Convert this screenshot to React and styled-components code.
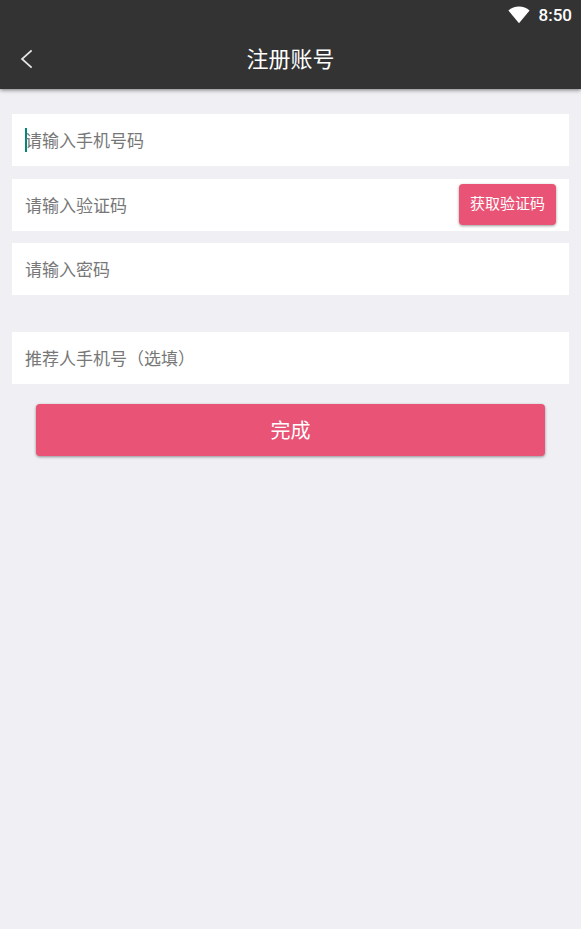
import React from 'react'
import styled, { createGlobalStyle, ThemeProvider } from 'styled-components'

const theme = {
  bar: '#333333',
  page: '#efeff4',
  field: '#ffffff',
  hint: '#777777',
  accent: '#e95375',
  caret: '#00897b',
}

const GlobalStyle = createGlobalStyle`
  * { box-sizing: border-box; }
  body { margin: 0; background: ${theme.page}; font-family: Roboto, "Noto Sans CJK SC", sans-serif; }
  button, input { font-family: inherit; }
`
const Header = styled.header`
  background: ${({theme}) => theme.bar}; color: #fff; box-shadow: 0 1px 4px rgba(0,0,0,.5);
`
const StatusBar = styled.div`
  height: 30px; padding: 0 9px; display: flex; align-items: center; justify-content: flex-end; gap: 9px; font-size: 17px; font-weight: 500;
`
const TitleBar = styled.div`
  height: 59px; display: grid; grid-template-columns: 52px 1fr 52px; align-items: center;
`
const BackButton = styled.button`
  height: 48px; padding: 0 0 2px; border: 0; background: none; color: inherit; display: grid; place-items: center;
`
const Title = styled.h1` margin: 0; font-size: 22px; line-height: 32px; font-weight: 400; text-align: center; `
const Form = styled.form` padding: 25px 12px; display: flex; flex-direction: column; `
const Field = styled.label`
  height: 52px; margin-bottom: ${({$gap}) => $gap || 13}px; padding: 0 13px; background: ${({theme}) => theme.field}; display: flex; align-items: center;
`
const Caret = styled.span` width: 2px; height: 24px; margin-right: -2px; background: ${({theme}) => theme.caret}; `
const Input = styled.input`
  flex: 1; min-width: 0; height: 52px; padding: 2px 0 0; border: 0; outline: 0; background: none; font-size: 17px;
  &::placeholder { color: ${({theme}) => theme.hint}; opacity: 1; }
`
const Button = styled.button`
  border: 0; border-radius: 4px; background: ${({theme}) => theme.accent}; color: #fff; box-shadow: 0 1px 3px rgba(0,0,0,.4);
`
const CodeButton = styled(Button)` height: 41px; margin-bottom: 2px; padding: 0 11px 4px; font-size: 15px; `
const SubmitButton = styled(Button)` height: 52px; margin: 0 24px; padding: 0 0 2px; font-size: 20px; `

export default function App() {
  return (
    <ThemeProvider theme={theme}>
      <GlobalStyle />
      <Header>
        <StatusBar>
          <svg width="22" height="18" viewBox="0 0 22 18" aria-hidden="true">
            <path d="M0.4 4.6C6-0.8 16-0.8 21.6 4.6L11 17.2Z" fill="#fff" />
          </svg>
          <time>8:50</time>
        </StatusBar>
        <TitleBar>
          <BackButton type="button" aria-label="返回">
            <svg width="12" height="20" viewBox="0 0 12 20" fill="none" stroke="#e6e6e6" strokeWidth="1.7" aria-hidden="true">
              <path d="M11.6 1.4L2 10L11.6 18.6" />
            </svg>
          </BackButton>
          <Title>注册账号</Title>
        </TitleBar>
      </Header>
      <Form onSubmit={e => e.preventDefault()}>
        <Field>
          <Caret />
          <Input type="tel" aria-label="手机号码" placeholder="请输入手机号码" />
        </Field>
        <Field $gap={12}>
          <Input type="text" aria-label="验证码" placeholder="请输入验证码" />
          <CodeButton type="button">获取验证码</CodeButton>
        </Field>
        <Field $gap={37}>
          <Input type="password" aria-label="密码" placeholder="请输入密码" />
        </Field>
        <Field $gap={20}>
          <Input type="tel" aria-label="推荐人手机号" placeholder="推荐人手机号（选填）" />
        </Field>
        <SubmitButton type="submit">完成</SubmitButton>
      </Form>
    </ThemeProvider>
  )
}
